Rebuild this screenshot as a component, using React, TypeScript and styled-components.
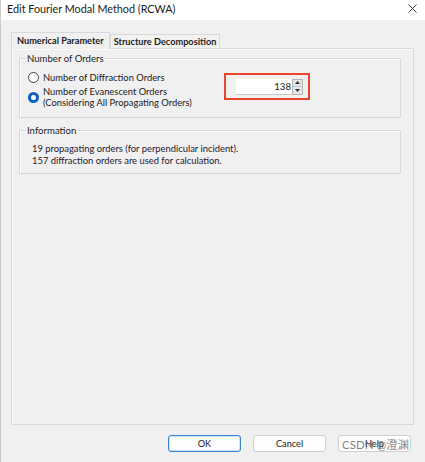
import styled, { createGlobalStyle } from "styled-components";

const GlobalStyle = createGlobalStyle`
  html, body {
    margin: 0;
    background: #f0f0f0;
  }
  body {
    font-family: Lato, "Noto Sans", sans-serif;
    font-size: 9.4px;
    color: #1b1b1b;
  }
`;

const Window = styled.div`
  width: 425px;
  height: 462px;
  display: flex;
  flex-direction: column;
  background: #f0f0f0;
  border-left: 1px solid #c9cfc6;
  box-sizing: border-box;
  overflow: hidden;
`;

const TitleBar = styled.div`
  height: 20px;
  flex: none;
  background: #ffffff;
  display: flex;
  align-items: center;
  justify-content: space-between;
  padding: 0 8px 4px 6px;
  box-sizing: border-box;
`;

const Title = styled.span`
  font-size: 10.8px;
  color: #1a1a1a;
`;

const Body = styled.div`
  flex: 1;
  display: flex;
  flex-direction: column;
  padding: 11px 11px 0 10px;
`;

const TabStrip = styled.div`
  display: flex;
  align-items: flex-end;
  height: 17px;
  position: relative;
  z-index: 1;
`;

const Tab = styled.div<{ $active?: boolean }>`
  height: ${(p) => (p.$active ? 17 : 14)}px;
  padding: 0 ${(p) => (p.$active ? 5 : 3)}px;
  display: flex;
  align-items: center;
  font-weight: 700;
  font-size: 9.2px;
  color: #222;
  background: ${(p) => (p.$active ? "#f0f0f0" : "#f2f2f2")};
  border: 1px solid #d9d9d9;
  border-bottom: ${(p) => (p.$active ? "1px solid #f0f0f0" : "none")};
  margin-bottom: ${(p) => (p.$active ? -1 : 0)}px;
  box-sizing: border-box;
`;

const Panel = styled.div`
  flex: 1;
  border: 1px solid #d9d9d9;
  box-shadow: inset 1px 1px 0 #fafafa;
  padding: 4px 12px 0 7px;
  display: flex;
  flex-direction: column;
  gap: 7px;
`;

const Group = styled.fieldset`
  margin: 0;
  border: 1px solid #d8d8d8;
  box-shadow: inset 1px 1px 0 #fbfbfb;
  padding: 0;
  min-width: 0;
`;

const Legend = styled.legend`
  padding: 0 1px;
  margin-left: 6px;
  font-size: 9.6px;
  color: #1b1b1b;
`;

const GroupContent = styled.div<{ $pad: string }>`
  padding: ${(p) => p.$pad};
`;

const OrdersGrid = styled.div`
  display: flex;
  align-items: flex-start;
`;

const RadioColumn = styled.div`
  width: 196px;
  display: flex;
  flex-direction: column;
  gap: 3px;
  padding-top: 1px;
`;

const RadioRow = styled.label`
  display: flex;
  align-items: center;
  gap: 4px;
  line-height: 11px;
`;

const RadioDot = styled.span<{ $checked?: boolean }>`
  width: 11px;
  height: 11px;
  border-radius: 50%;
  flex: none;
  box-sizing: border-box;
  border: ${(p) => (p.$checked ? "3px solid #0b5fc7" : "1px solid #444")};
  background: #fff;
`;

const HighlightBox = styled.div`
  margin-top: 2px;
  border: 2px solid #e8452c;
  width: 86px;
  height: 27px;
  box-sizing: border-box;
  display: flex;
  align-items: center;
  justify-content: flex-end;
  padding-right: 5px;
`;

const SpinInput = styled.div`
  width: 56px;
  height: 16px;
  background: #fff;
  border-bottom: 1px solid #c9c9c9;
  box-sizing: border-box;
  display: flex;
  align-items: center;
  justify-content: flex-end;
  padding-right: 1px;
  font-size: 9.6px;
`;

const SpinButtons = styled.div`
  width: 11px;
  height: 16px;
  display: flex;
  flex-direction: column;
  border: 1px solid #b5b5b5;
  box-sizing: border-box;
  background: #e6e6e6;
`;

const SpinHalf = styled.div`
  flex: 1;
  display: flex;
  align-items: center;
  justify-content: center;
  &:first-child {
    border-bottom: 1px solid #c4c4c4;
  }
`;

const InfoText = styled.div`
  line-height: 12px;
  color: #262030;
`;

const Footer = styled.div`
  height: 37px;
  flex: none;
  display: flex;
  align-items: center;
  justify-content: flex-end;
  gap: 12px;
  padding-right: 14px;
`;

const Button = styled.div<{ $default?: boolean }>`
  width: 73px;
  height: 17px;
  border-radius: 3px;
  box-sizing: border-box;
  border: 1px solid ${(p) => (p.$default ? "#3a82d6" : "#cfcfcf")};
  box-shadow: ${(p) => (p.$default ? "inset 0 0 0 1px #cfe2f7" : "none")};
  background: #fdfdfd;
  display: flex;
  align-items: center;
  justify-content: center;
  font-size: 9.2px;
  position: relative;
`;

const Watermark = styled.span`
  position: absolute;
  left: 3px;
  top: 0px;
  font-family: Lato, "Noto Sans CJK SC", sans-serif;
  font-size: 11.5px;
  color: rgba(90, 90, 90, 0.75);
  white-space: nowrap;
`;

const Arrow = ({ up }: { up?: boolean }) => (
  <svg width="5" height="3" viewBox="0 0 5 3">
    <path d={up ? "M0 3 L2.5 0 L5 3 Z" : "M0 0 L2.5 3 L5 0 Z"} fill="#333" />
  </svg>
);

export default function App() {
  return (
    <Window>
      <GlobalStyle />
      <TitleBar>
        <Title>Edit Fourier Modal Method (RCWA)</Title>
        <svg width="9" height="9" viewBox="0 0 9 9">
          <path d="M0.5 0.5 L8.5 8.5 M8.5 0.5 L0.5 8.5" stroke="#333" strokeWidth="1" />
        </svg>
      </TitleBar>
      <Body>
        <TabStrip>
          <Tab $active>Numerical Parameter</Tab>
          <Tab>Structure Decomposition</Tab>
        </TabStrip>
        <Panel>
          <Group>
            <Legend>Number of Orders</Legend>
            <GroupContent $pad="7px 10px 9px 8px">
              <OrdersGrid>
                <RadioColumn>
                  <RadioRow>
                    <RadioDot />
                    Number of Diffraction Orders
                  </RadioRow>
                  <RadioRow>
                    <RadioDot $checked />
                    <span>
                      Number of Evanescent Orders
                      <br />
                      (Considering All Propagating Orders)
                    </span>
                  </RadioRow>
                </RadioColumn>
                <HighlightBox>
                  <SpinInput>138</SpinInput>
                  <SpinButtons>
                    <SpinHalf>
                      <Arrow up />
                    </SpinHalf>
                    <SpinHalf>
                      <Arrow />
                    </SpinHalf>
                  </SpinButtons>
                </HighlightBox>
              </OrdersGrid>
            </GroupContent>
          </Group>
          <Group>
            <Legend>Information</Legend>
            <GroupContent $pad="7px 10px 6px 12px">
              <InfoText>
                19 propagating orders (for perpendicular incident).
                <br />
                157 diffraction orders are used for calculation.
              </InfoText>
            </GroupContent>
          </Group>
        </Panel>
      </Body>
      <Footer>
        <Button $default>OK</Button>
        <Button>Cancel</Button>
        <Button>
          Help
          <Watermark>CSDN @澄渊</Watermark>
        </Button>
      </Footer>
    </Window>
  );
}
